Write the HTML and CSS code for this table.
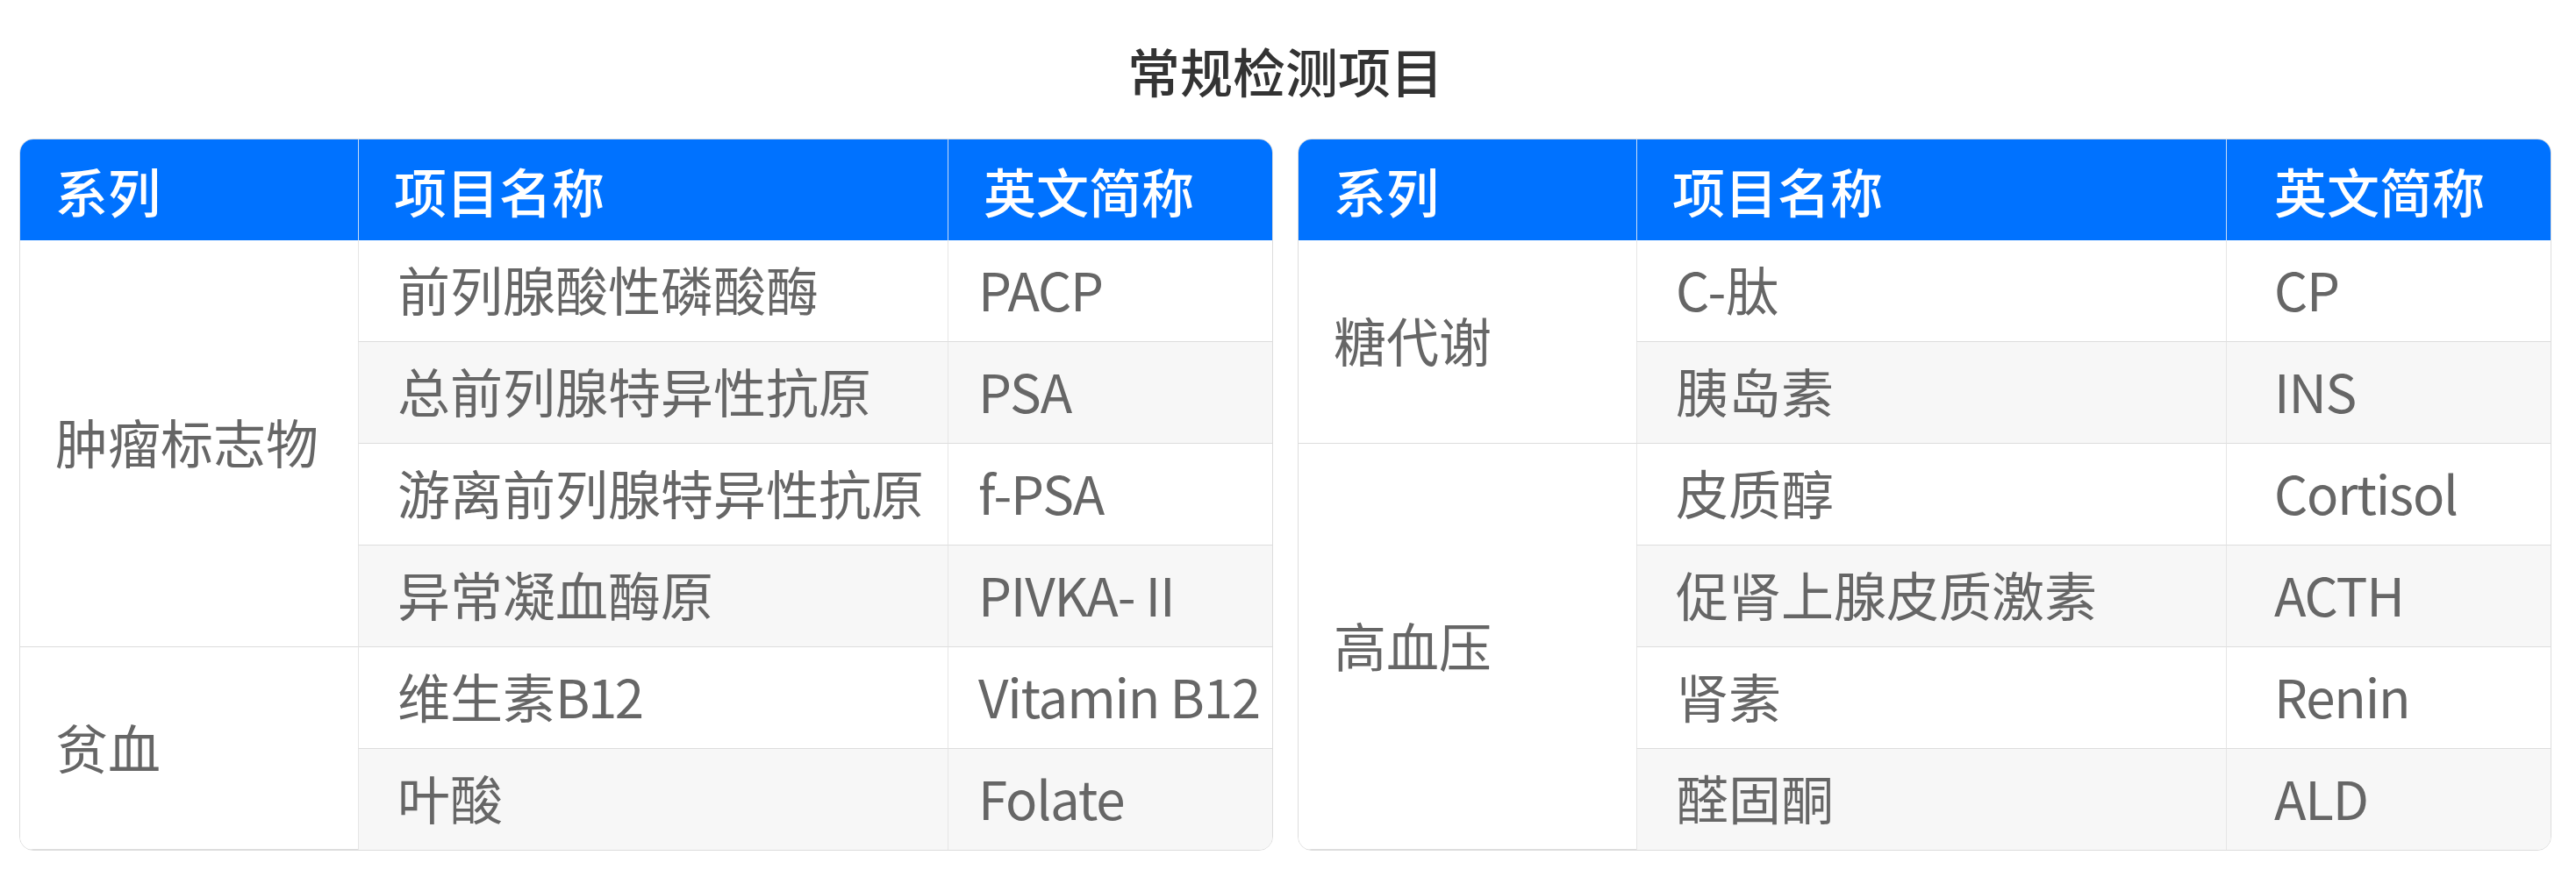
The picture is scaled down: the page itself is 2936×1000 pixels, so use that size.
FILE: index.html
```html
<!DOCTYPE html>
<html lang="zh-CN">
<head>
<meta charset="utf-8">
<title>常规检测项目</title>
<link rel="stylesheet" href="styles.css">
</head>
<body>
<div class="page">
  <h1 class="title">常规检测项目</h1>
  <div class="tables">
    <div class="card">
      <table class="grid">
        <colgroup><col class="c1"><col class="c2"><col class="c3"></colgroup>
        <thead>
          <tr><th>系列</th><th>项目名称</th><th>英文简称</th></tr>
        </thead>
        <tbody>
          <tr><td class="series" rowspan="4">肿瘤标志物</td><td>前列腺酸性磷酸酶</td><td>PACP</td></tr>
          <tr><td>总前列腺特异性抗原</td><td>PSA</td></tr>
          <tr><td>游离前列腺特异性抗原</td><td>f-PSA</td></tr>
          <tr><td>异常凝血酶原</td><td>PIVKA- II</td></tr>
          <tr><td class="series" rowspan="2">贫血</td><td>维生素<span class="latin">B12</span></td><td>Vitamin B12</td></tr>
          <tr class="last"><td>叶酸</td><td>Folate</td></tr>
        </tbody>
      </table>
    </div>
    <div class="card card-right">
      <table class="grid">
        <colgroup><col class="c1"><col class="c2"><col class="c3"></colgroup>
        <thead>
          <tr><th>系列</th><th>项目名称</th><th>英文简称</th></tr>
        </thead>
        <tbody>
          <tr><td class="series" rowspan="2">糖代谢</td><td>C-肽</td><td>CP</td></tr>
          <tr><td>胰岛素</td><td>INS</td></tr>
          <tr><td class="series" rowspan="4">高血压</td><td>皮质醇</td><td>Cortisol</td></tr>
          <tr><td>促肾上腺皮质激素</td><td>ACTH</td></tr>
          <tr><td>肾素</td><td>Renin</td></tr>
          <tr class="last"><td>醛固酮</td><td>ALD</td></tr>
        </tbody>
      </table>
    </div>
  </div>
</div>
</body>
</html>
```

FILE: styles.css
```css
* { box-sizing: border-box; }

html, body {
  margin: 0;
  padding: 0;
  background: #ffffff;
}

body {
  font-family: "Noto Sans CJK SC", "Noto Sans", sans-serif;
  color: #666666;
}

.page {
  padding: 0 28px 0 22px;
}

.title {
  margin: 0;
  height: 158px;
  padding-top: 38px;
  font-size: 60px;
  line-height: 84px;
  font-weight: 500;
  color: #333333;
  text-align: center;
}

.tables {
  display: grid;
  grid-template-columns: 1fr 1fr;
  gap: 28px;
}

.card {
  border: 1px solid #dddddd;
  border-radius: 16px;
  overflow: hidden;
  background: #ffffff;
}

.grid {
  width: 100%;
  table-layout: fixed;
  border-collapse: separate;
  border-spacing: 0;
  font-size: 60px;
}

.c1 { width: 385px; }
.c2 { width: 672px; }
.c3 { width: auto; }

.grid th {
  height: 115px;
  padding: 0 0 0 40px;
  background: #0072ff;
  color: #ffffff;
  font-weight: 500;
  text-align: left;
  line-height: 1;
  border-left: 1px solid #c9dcf7;
}

.grid th:first-child { border-left: none; }

.grid td {
  height: 116px;
  padding: 0 0 5px 44px;
  text-align: left;
  line-height: 1;
  white-space: nowrap;
  border-left: 1px solid #e6e6e6;
  border-bottom: 1px solid #dddddd;
}

.grid td.series {
  padding-left: 40px;
  border-left: none;
  background: #ffffff;
}

.grid td:last-child {
  padding-left: 34px;
  letter-spacing: -1.2px;
}

.latin { letter-spacing: -2.5px; }

.card-right .grid td:last-child,
.card-right .grid th:last-child { padding-left: 54px; }

.grid tbody tr:nth-child(even) td { background: #f7f7f7; }
.grid tbody tr:nth-child(even) td.series { background: #ffffff; }

.grid tbody tr.last td { border-bottom: none; height: 115px; }
```
